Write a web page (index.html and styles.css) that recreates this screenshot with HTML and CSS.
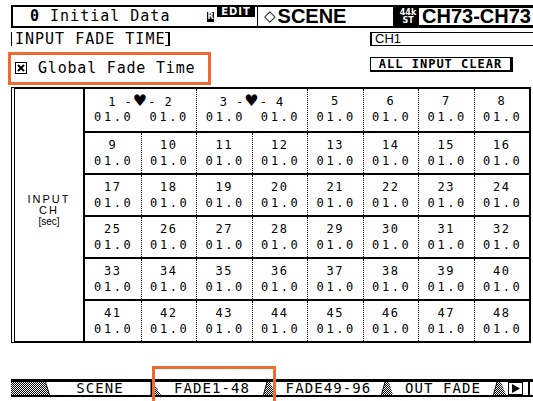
FILE: index.html
```html
<!DOCTYPE html>
<html>

<head>
    <meta charset="utf-8">
    <link rel="stylesheet" href="styles.css">
</head>

<body>
    <div class="screen">
        <svg class="defs" width="0" height="0">
            <defs>
                <pattern id="ck" width="2" height="2" patternUnits="userSpaceOnUse">
                    <rect width="1" height="1" fill="#000" />
                    <rect x="1" y="1" width="1" height="1" fill="#000" />
                </pattern>
            </defs>
        </svg>

        <!-- title bar -->
        <div class="topbar">
            <div class="memo"><b>0</b> Initial Data</div>
            <span class="rbadge">R</span>
            <span class="edit">EDIT</span>
            <div class="mode"><span class="diamond">◇</span>SCENE</div>
            <div class="chblock">
                <span class="rate">44k<br>ST</span>
                <span class="chname">CH73-CH73</span>
            </div>
        </div>

        <div class="subrow">
            <div class="pagetitle">INPUT FADE TIME</div>
            <div class="chsel">CH1</div>
        </div>

        <div class="optrow">
            <div class="global">
                <svg class="check" width="12" height="12" viewBox="0 0 12 12">
                    <rect x="0.5" y="0.5" width="11" height="11" fill="none" stroke="#000" />
                    <path d="M3 3 L9 9 M9 3 L3 9" stroke="#000" stroke-width="2" />
                </svg>
                <span>Global Fade Time</span>
            </div>
            <div class="clearbtn">ALL INPUT CLEAR</div>
        </div>

        <!-- fade time table -->
        <div class="frame">
            <div class="side">
                <span class="side-big">INPUT</span>
                <span class="side-big">CH</span>
                <span class="side-small">[sec]</span>
            </div>
            <div class="grid" id="grid"></div>
        </div>

        <!-- page tabs -->
        <div class="tabs">
            <svg class="tabcap" width="39" height="13">
                <polygon points="0,0 34,0 39,13 0,13" fill="url(#ck)" />
                <line x1="34.5" y1="0" x2="38.5" y2="13" stroke="#000" />
            </svg>
            <span class="tab t-scene">SCENE</span>
            <svg class="sep" width="11" height="13">
                <line x1="1.5" y1="0" x2="1.5" y2="13" stroke="#000" stroke-width="2" />
                <polygon points="2,2 4,2 11,13 2,13" fill="url(#ck)" />
            </svg>
            <span class="tab t-fade1">FADE1-48</span>
            <svg class="sep" width="13" height="13">
                <polygon points="4,0 7,0 13,13 0,13" fill="url(#ck)" />
                <line x1="4" y1="0" x2="0.5" y2="13" stroke="#000" />
            </svg>
            <span class="tab t-fade2">FADE49-96</span>
            <svg class="sep" width="12" height="13">
                <polygon points="4,0 8,0 12,13 0,13" fill="url(#ck)" />
                <line x1="4" y1="0" x2="0.5" y2="13" stroke="#000" />
            </svg>
            <span class="tab t-out">OUT FADE</span>
            <svg class="sep" width="13" height="13">
                <polygon points="4,0 8,0 13,13 0,13" fill="url(#ck)" />
                <line x1="4" y1="0" x2="0.5" y2="13" stroke="#000" />
            </svg>
            <svg class="arrow" width="15" height="13">
                <rect x="0.5" y="0.5" width="14" height="12" fill="#fff" stroke="#000" />
                <polygon points="4,2 12,6.5 4,11" fill="#000" />
            </svg>
            <span class="tabend"></span>
        </div>

        <div class="mark mark-global"></div>
        <div class="mark mark-tab"></div>
    </div>

    <script>
        function buildGrid() {
            const grid = document.getElementById('grid');
            for (let r = 0; r < 6; ++r) {
                const row = document.createElement('div');
                row.className = 'row';
                if (r == 0) {
                    row.appendChild(makePair(1));
                    row.appendChild(makePair(3));
                    for (let c = 5; c <= 8; ++c) {
                        row.appendChild(makeCell(c));
                    }
                } else {
                    for (let c = 1; c <= 8; ++c) {
                        row.appendChild(makeCell(r * 8 + c));
                    }
                }
                grid.appendChild(row);
            }
        }

        function makeCell(ch) {
            const cell = document.createElement('div');
            cell.className = 'cell';
            cell.innerHTML = '<div class="chno">' + ch + '</div><div class="val">01.0</div>';
            return cell;
        }

        function makePair(ch) {
            const cell = document.createElement('div');
            cell.className = 'cell pair';
            cell.innerHTML = '<div class="chno pairno">' + ch + ' -<span class="heart">♥</span>- ' + (ch + 1) + '</div>'
                + '<div class="pairvals"><span class="val">01.0</span><span class="val">01.0</span></div>';
            return cell;
        }

        buildGrid();
    </script>
</body>

</html>
```

FILE: styles.css
```css
* {
    box-sizing: border-box;
}

body {
    margin: 0;
    background: #fff;
}

.screen {
    position: relative;
    width: 533px;
    height: 401px;
    overflow: hidden;
    padding-top: 5px;
    padding-left: 11px;
    background: #fff;
    color: #000;
    font-family: "DejaVu Sans Mono", monospace;
}

.defs {
    display: block;
}

/* title bar */
.topbar {
    display: flex;
    height: 23px;
    border-top: 2px solid #000;
    border-bottom: 2px solid #000;
    border-left: 2px solid #000;
}

.memo {
    width: 192px;
    padding-left: 17px;
    font-size: 15px;
    line-height: 19px;
    letter-spacing: 1px;
    white-space: pre;
}

.rbadge {
    align-self: center;
    margin-left: 2px;
    width: 7px;
    height: 10px;
    background: #000;
    color: #fff;
    font: bold 8px/10px "DejaVu Sans", sans-serif;
    text-align: center;
}

.edit {
    align-self: flex-start;
    margin-left: 3px;
    width: 38px;
    height: 10px;
    background: #000;
    color: #fff;
    font: bold 10px/10px "DejaVu Sans", sans-serif;
    letter-spacing: 1px;
    text-align: center;
}

.mode {
    display: flex;
    align-items: center;
    width: 136px;
    margin-left: 2px;
    padding-left: 6px;
    border-left: 1px solid #000;
    font: bold 20px/19px "Liberation Sans", sans-serif;
}

.diamond {
    margin-right: 2px;
    font: 15px/19px "DejaVu Sans", sans-serif;
}

.chblock {
    flex: 1;
    display: flex;
    padding: 1px 0 1px 4px;
    background: #000;
}

.rate {
    align-self: center;
    width: 22px;
    color: #fff;
    font: bold 8px/8px "DejaVu Sans", sans-serif;
    text-align: center;
}

.chname {
    flex: 1;
    padding-left: 3px;
    background: #fff;
    font: bold 20px/17px "Liberation Sans", sans-serif;
    white-space: nowrap;
}

/* page title + channel */
.subrow {
    display: flex;
    height: 14px;
    margin-top: 4px;
}

.pagetitle {
    padding: 0 3px;
    border-left: 1px solid #000;
    border-right: 2px solid #000;
    background:
        linear-gradient(#000, #000) right top / 3px 1px no-repeat,
        linear-gradient(#000, #000) right bottom / 3px 1px no-repeat;
    font-size: 15px;
    line-height: 14px;
    letter-spacing: 1px;
}

.chsel {
    width: 163px;
    margin-left: auto;
    padding-left: 3px;
    border-top: 1px solid #000;
    border-bottom: 1px solid #000;
    border-left: 2px solid #000;
    font: 13px/12px "Liberation Sans", sans-serif;
}

.optrow {
    display: flex;
    height: 41px;
}

.global {
    display: flex;
    align-items: center;
    gap: 11px;
    height: 16px;
    margin-top: 14px;
    padding-left: 4px;
    font-size: 15px;
    letter-spacing: 0.8px;
}

.clearbtn {
    width: 143px;
    height: 15px;
    margin: 11px 20px 0 auto;
    border: 1px solid #000;
    border-right-width: 3px;
    border-bottom-width: 2px;
    font-size: 12px;
    font-weight: bold;
    line-height: 12px;
    letter-spacing: 1px;
    text-align: center;
}

/* table */
.frame {
    display: flex;
    width: 520px;
    height: 256px;
    border: 2px solid #000;
    border-left: 4px double #000;
}

.side {
    display: flex;
    flex-direction: column;
    align-items: center;
    justify-content: center;
    width: 70px;
    padding-bottom: 8px;
    border-right: 2px solid #000;
    font-family: "Liberation Sans", sans-serif;
}

.side-big {
    font-size: 11px;
    line-height: 11px;
    letter-spacing: 2px;
}

.side-small {
    font-size: 10px;
    line-height: 12px;
}

.grid {
    flex: 1;
    display: grid;
    grid-template-rows: repeat(6, 1fr);
}

.row {
    display: grid;
    grid-template-columns: repeat(8, 1fr);
}

.row + .row {
    border-top: 2px solid #000;
}

.cell {
    padding-top: 4px;
    text-align: center;
    font-size: 12px;
    line-height: 16px;
}

.cell + .cell {
    border-left: 1px dotted #000;
}

.pair {
    grid-column: span 2;
}

.chno {
    height: 16px;
    letter-spacing: 1.5px;
}

.pairno {
    letter-spacing: 1px;
}

.heart {
    font: 16px/16px "DejaVu Sans", sans-serif;
}

.val {
    letter-spacing: 2.6px;
    padding-left: 2px;
}

.pairvals {
    display: grid;
    grid-template-columns: 1fr 1fr;
}

/* page tabs */
.tabs {
    display: flex;
    align-items: center;
    width: 522px;
    height: 18px;
    margin-top: 36px;
    border-top: 3px solid #000;
    border-bottom: 2px solid #000;
}

.tabs svg {
    display: block;
    flex-shrink: 0;
}

.tab {
    font-size: 14px;
    line-height: 13px;
    letter-spacing: 1.1px;
    text-align: center;
    white-space: nowrap;
}

.t-scene {
    width: 100px;
}

.t-fade1 {
    width: 102px;
}

.t-fade2 {
    width: 105px;
}

.t-out {
    width: 100px;
}

.arrow {
    margin-left: 2px;
}

.tabend {
    width: 2px;
    height: 13px;
    margin-left: 5px;
    background: #000;
}

/* annotation boxes */
.mark {
    position: absolute;
    border: 3px solid #ee6a33;
}

.mark-global {
    left: 8px;
    top: 52px;
    width: 203px;
    height: 33px;
}

.mark-tab {
    left: 152px;
    top: 366px;
    width: 124px;
    height: 40px;
}
```
